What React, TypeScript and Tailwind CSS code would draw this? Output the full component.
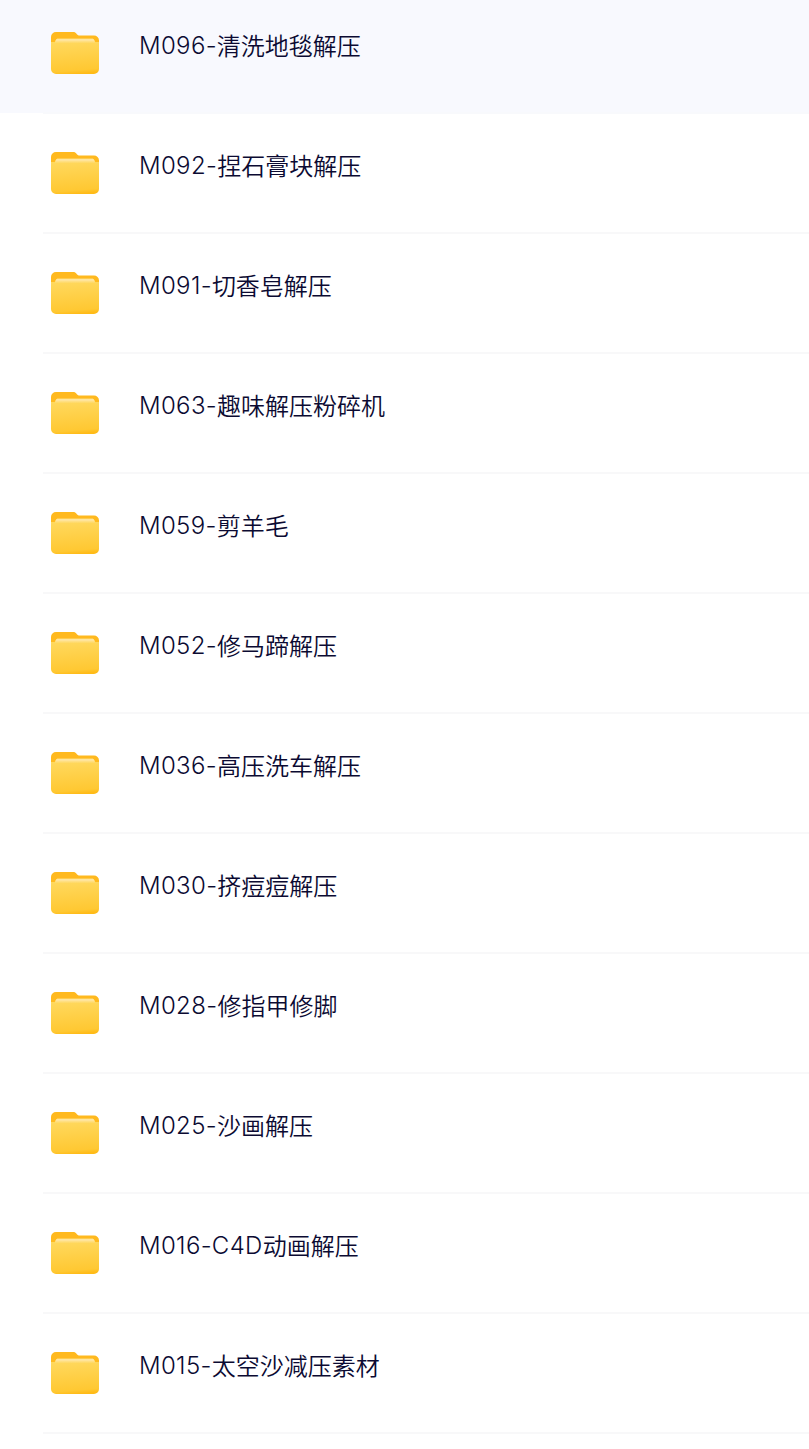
interface FolderRowProps {
  code: string;
  title: string;
  active?: boolean;
}

const folders = [
  { code: 'M096-', title: '清洗地毯解压' },
  { code: 'M092-', title: '捏石膏块解压' },
  { code: 'M091-', title: '切香皂解压' },
  { code: 'M063-', title: '趣味解压粉碎机' },
  { code: 'M059-', title: '剪羊毛' },
  { code: 'M052-', title: '修马蹄解压' },
  { code: 'M036-', title: '高压洗车解压' },
  { code: 'M030-', title: '挤痘痘解压' },
  { code: 'M028-', title: '修指甲修脚' },
  { code: 'M025-', title: '沙画解压' },
  { code: 'M016-C4D', title: '动画解压' },
  { code: 'M015-', title: '太空沙减压素材' },
];

function FolderIcon() {
  return (
    <svg className="w-12 h-[42px] shrink-0" viewBox="0 0 48 42" fill="none">
      <defs>
        <linearGradient id="folder-front" x1="21" y1="6" x2="24" y2="42" gradientUnits="userSpaceOnUse">
          <stop stopColor="#ffda62" />
          <stop offset=".9" stopColor="#ffc832" />
          <stop offset="1" stopColor="#ffbb18" />
        </linearGradient>
        <linearGradient id="folder-shine" x1="0" y1="6.500" x2="0" y2="11.500" gradientUnits="userSpaceOnUse">
          <stop stopColor="#ffe7a2" />
          <stop offset=".4" stopColor="#ffe49a" />
          <stop offset="1" stopColor="#ffe08a" stopOpacity="0" />
        </linearGradient>
      </defs>
      <path d="M0 5a5 5 0 0 1 5-5h17c1.500 0 2.300.4 3.100 1.300l.8 1c.8.9 1.600 1.300 2.900 1.300H43a5 5 0 0 1 5 5V25H0Z" fill="#ffb91e" />
      <path d="M0 10.100h2.600c1.200 0 1.700-.5 2-1.500C5 7.200 5.700 6.700 7 6.700h34c1.300 0 2 .5 2.400 1.900.3 1 .8 1.500 2 1.500H48v26.900a5 5 0 0 1-5 5H5a5 5 0 0 1-5-5Z" fill="url(#folder-front)" />
      <path d="M4 10c.3-.3.500-.8.600-1.400C5 7.200 5.700 6.700 7 6.700h34c1.300 0 2 .5 2.400 1.900.1.600.3 1.100.6 1.400v1.500H4Z" fill="url(#folder-shine)" />
    </svg>
  );
}

function FolderRow({ code, title, active }: FolderRowProps) {
  return (
    <div className={active ? 'h-[119px] mb-px pl-[43px] bg-[#f8f9fe]' : 'h-[119px] mb-px pl-[43px]'}>
      <div className={`flex h-[120px] items-start gap-10 border-b-2 pl-2 pt-[38px] ${active ? 'border-[#f8f9fc]' : 'border-[#f8f8f9]'}`}>
        <FolderIcon />
        <div className="flex text-2xl leading-[30px] text-[#0b0a32] whitespace-nowrap">
          <span className="-mt-px font-light tracking-[0.014em] font-['Inter',sans-serif]">{code}</span>
          <span className="-mt-0.5 font-[350] font-['Noto_Sans_CJK_SC',sans-serif]">{title}</span>
        </div>
      </div>
    </div>
  );
}

export default function App() {
  return (
    <div className="h-[1449px] w-full overflow-hidden bg-white">
      <div className="-mt-1.5">
        {folders.map((folder, index) => (
          <FolderRow key={folder.code} code={folder.code} title={folder.title} active={index === 0} />
        ))}
      </div>
    </div>
  );
}
